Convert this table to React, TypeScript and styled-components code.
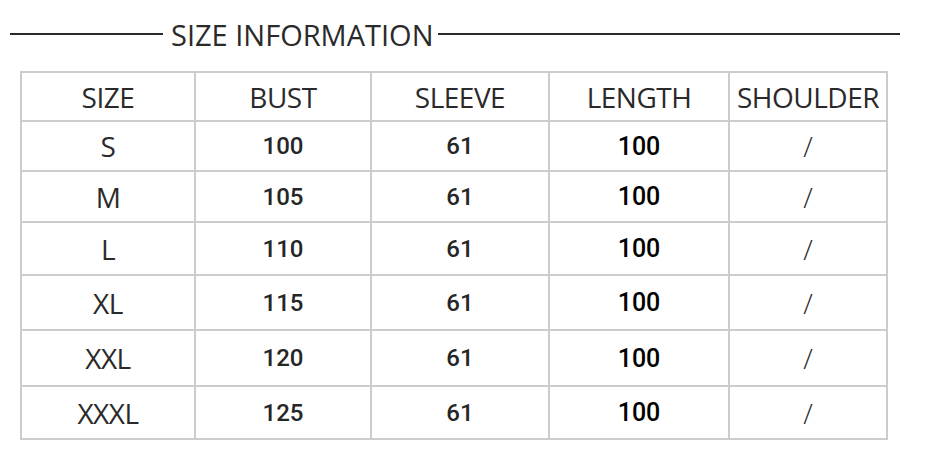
import React from 'react';
import styled, { createGlobalStyle } from 'styled-components';

const GlobalStyle = createGlobalStyle`
  body {
    margin: 0;
    background: #ffffff;
    font-family: "Open Sans", "Noto Sans", sans-serif;
  }
`;

const Page = styled.div`
  width: 929px;
  height: 472px;
  background: #ffffff;
  padding-top: 13px;
  box-sizing: border-box;
`;

// Title row with rules on both sides
const TitleRow = styled.div`
  display: flex;
  align-items: center;
  width: 890px;
  margin-left: 10px;
  height: 42px;
`;

const Rule = styled.div<{ $width?: number }>`
  height: 2px;
  background: #2a2a2a;
  ${(p) => (p.$width ? `width: ${p.$width}px;` : 'flex: 1;')}
`;

const Title = styled.h1`
  margin: 0 4px 0 8px;
  font-size: 29px;
  font-weight: 400;
  color: #2a2a2a;
  white-space: nowrap;
`;

const Table = styled.table`
  margin: 16px 0 0 20px;
  border-collapse: collapse;
  table-layout: fixed;
  width: 868px;
  border: 2px solid #cccccc;
`;

type Kind = 'label' | 'num' | 'bold' | 'slash';

const isNum = (k: Kind) => k === 'num' || k === 'bold';

const Cell = styled.td<{ $kind: Kind }>`
  border: 2px solid #cccccc;
  text-align: center;
  vertical-align: middle;
  padding: 0;
  color: ${(p) => (p.$kind === 'bold' ? '#000000' : p.$kind === 'num' ? '#262626' : '#2a2a2a')};
  font-family: ${(p) => (isNum(p.$kind) ? 'Roboto, "Open Sans", sans-serif' : '"Open Sans", sans-serif')};
  font-size: ${(p) => (p.$kind === 'bold' ? '25px' : p.$kind === 'num' ? '24px' : '28px')};
  font-weight: ${(p) => (isNum(p.$kind) ? 500 : p.$kind === 'slash' ? 300 : 400)};
  letter-spacing: ${(p) => (p.$kind === 'label' ? '-0.5px' : '0')};
`;

const HeadCell = styled.th`
  border: 2px solid #cccccc;
  text-align: center;
  vertical-align: middle;
  padding: 0;
  color: #2a2a2a;
  font-size: 28px;
  font-weight: 400;
  letter-spacing: -0.5px;
`;

const columns = [
  { name: 'SIZE', width: 174 },
  { name: 'BUST', width: 176 },
  { name: 'SLEEVE', width: 178 },
  { name: 'LENGTH', width: 180 },
  { name: 'SHOULDER', width: 158 },
];

const rows = [
  { size: 'S', bust: '100', height: 50 },
  { size: 'M', bust: '105', height: 51 },
  { size: 'L', bust: '110', height: 53 },
  { size: 'XL', bust: '115', height: 55 },
  { size: 'XXL', bust: '120', height: 56 },
  { size: 'XXXL', bust: '125', height: 53 },
];

const App = () => (
  <Page>
    <GlobalStyle />
    <TitleRow>
      <Rule $width={153} />
      <Title>SIZE INFORMATION</Title>
      <Rule />
    </TitleRow>

    <Table>
      <colgroup>
        {columns.map((c) => (
          <col key={c.name} style={{ width: c.width }} />
        ))}
      </colgroup>
      <thead>
        <tr style={{ height: 49 }}>
          {columns.map((c) => (
            <HeadCell key={c.name}>{c.name}</HeadCell>
          ))}
        </tr>
      </thead>
      <tbody>
        {rows.map((r) => (
          <tr key={r.size} style={{ height: r.height }}>
            <Cell $kind="label">{r.size}</Cell>
            <Cell $kind="num">{r.bust}</Cell>
            <Cell $kind="num">61</Cell>
            <Cell $kind="bold">100</Cell>
            <Cell $kind="slash">/</Cell>
          </tr>
        ))}
      </tbody>
    </Table>
  </Page>
);

export default App;
